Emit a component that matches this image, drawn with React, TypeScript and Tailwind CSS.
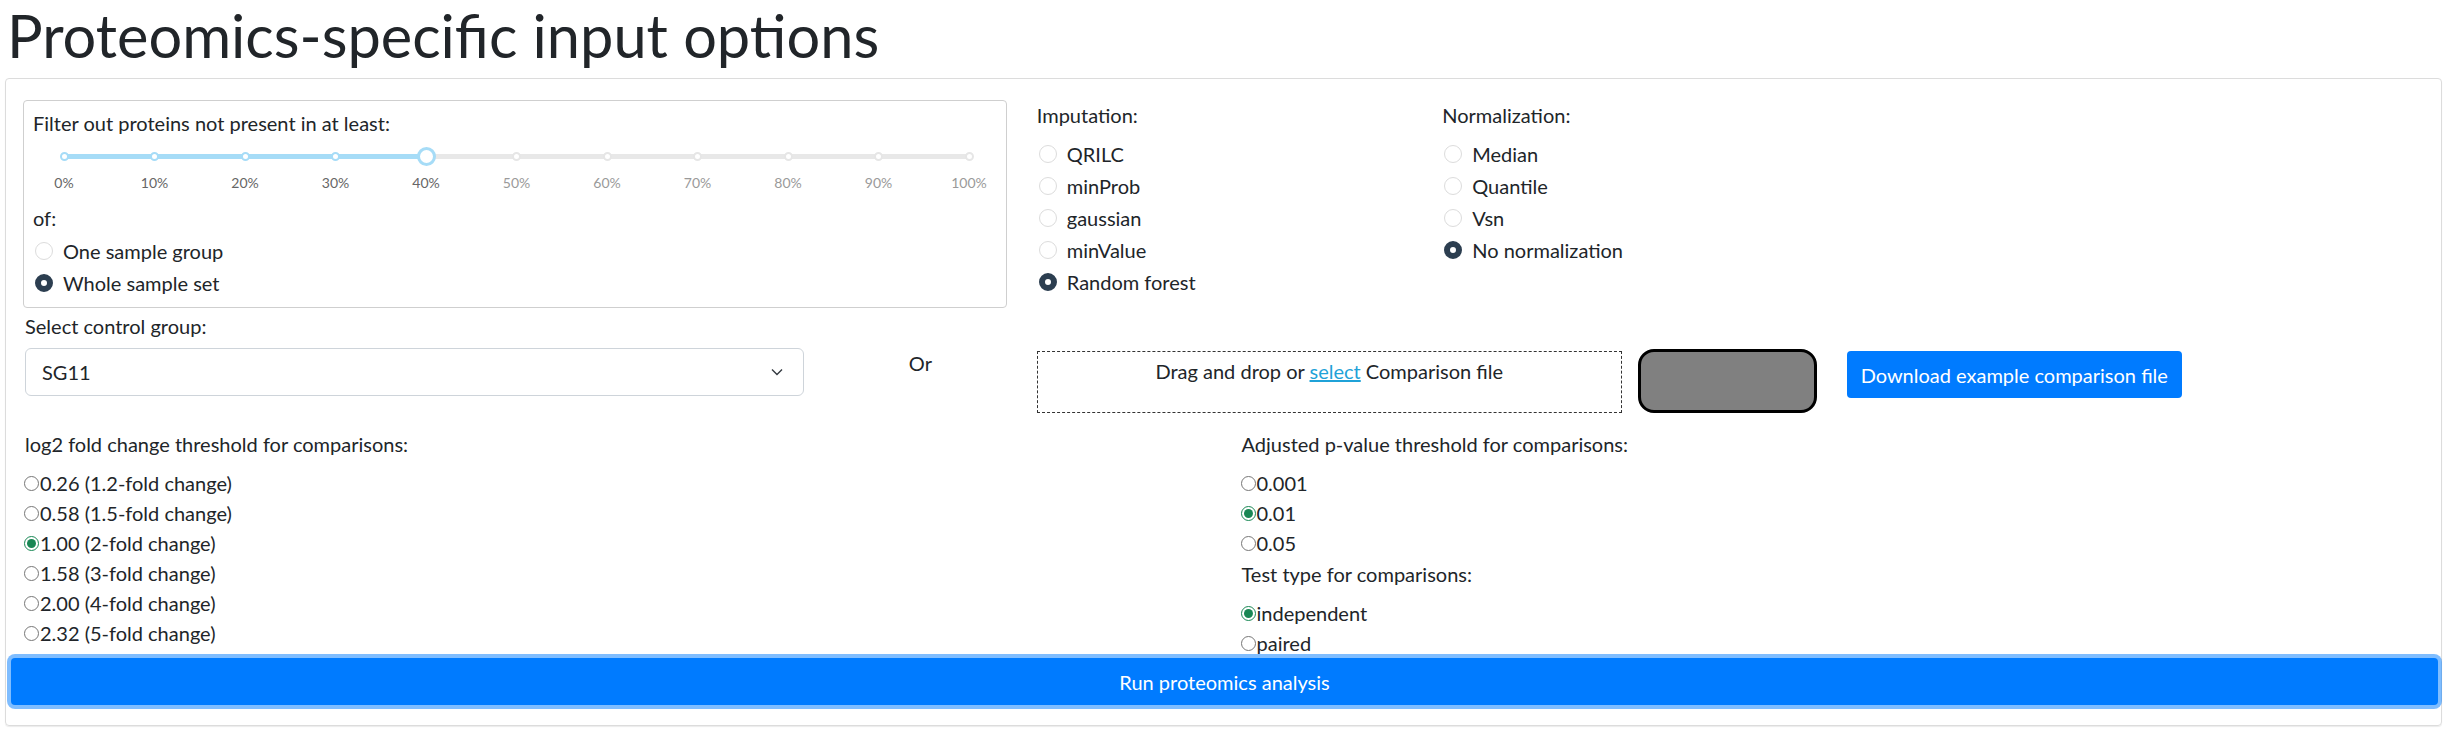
import React from "react";

const FONT = { fontFamily: "Lato, 'Noto Sans', sans-serif" };

function PrettyRadio({ label, checked }: { label: string; checked?: boolean }) {
  return (
    <div className="flex items-center h-[30px] mb-[2px]">
      <span
        className={
          checked
            ? "ml-[2px] w-[18px] h-[18px] rounded-full border-[6px] border-[#2c3e50] bg-white"
            : "ml-[2px] w-[18px] h-[18px] rounded-full border border-[#dcdcdc] bg-white"
        }
      />
      <span className="ml-[10px]">{label}</span>
    </div>
  );
}

function NativeRadio({ name, label, checked }: { name: string; label: string; checked?: boolean }) {
  return (
    <label className="flex items-center h-[30px]">
      <input
        type="radio"
        name={name}
        defaultChecked={checked}
        className="m-0 ml-[1px] mr-[1px] w-[15px] h-[15px] accent-[#198754]"
      />
      <span>{label}</span>
    </label>
  );
}

const ticks = [0, 10, 20, 30, 40, 50, 60, 70, 80, 90, 100];

function Slider({ value }: { value: number }) {
  return (
    <div className="relative h-[55px] ml-[31px] w-[905px]">
      <div className="absolute left-0 right-0 top-[16px] h-[5px] rounded-full bg-[#e8e8e8]" />
      <div
        className="absolute left-0 top-[16px] h-[5px] rounded-full bg-[#a6dcf7]"
        style={{ width: `${value}%` }}
      />
      {ticks.map((t) => (
        <div
          key={t}
          className={
            t <= value
              ? "absolute top-[14px] w-[9px] h-[9px] -ml-[4.5px] rounded-full bg-white border-2 border-[#a6dcf7]"
              : "absolute top-[14px] w-[9px] h-[9px] -ml-[4.5px] rounded-full bg-white border-2 border-[#e6e6e6]"
          }
          style={{ left: `${t}%` }}
        />
      ))}
      <div
        className="absolute top-[9px] w-[19px] h-[19px] -ml-[9.5px] rounded-full bg-white border-[3px] border-[#a6dcf7]"
        style={{ left: `${value}%` }}
      />
      {ticks.map((t) => (
        <div
          key={"l" + t}
          className={
            t <= value
              ? "absolute top-[35px] leading-[20px] text-[14px] text-[#666] -translate-x-1/2"
              : "absolute top-[35px] leading-[20px] text-[14px] text-[#9a9a9a] -translate-x-1/2"
          }
          style={{ left: `${t}%` }}
        >
          {t}%
        </div>
      ))}
    </div>
  );
}

export default function App() {
  return (
    <div className="bg-white min-h-screen px-[5px] text-[20px] leading-[30px] text-[#212529]" style={FONT}>
      <h1 className="text-[59.5px] leading-[1.2] font-normal text-[#212529] pl-[2px] mb-[7px]">
        Proteomics-specific input options
      </h1>

      <div className="border border-[#dcdcdc] rounded-[4px] shadow-[0_1px_1px_rgba(0,0,0,0.08)] pl-[2px] pt-[21px] pb-[20px]">
        {/* row 1 */}
        <div className="grid grid-cols-12">
          <div className="col-span-5 px-[15px]">
            <div className="border border-[#cfcfcf] rounded-[4px] pl-[9px] pt-[7px] pb-[7px]">
              <div>Filter out proteins not present in at least:</div>
              <Slider value={40} />
              <div className="mt-[10px] mb-[3px]">of:</div>
              <PrettyRadio label="One sample group" />
              <PrettyRadio label="Whole sample set" checked />
            </div>
          </div>
          <div className="col-span-2 px-[15px]">
            <div className="mb-[9px]">Imputation:</div>
            <PrettyRadio label="QRILC" />
            <PrettyRadio label="minProb" />
            <PrettyRadio label="gaussian" />
            <PrettyRadio label="minValue" />
            <PrettyRadio label="Random forest" checked />
          </div>
          <div className="col-span-2 px-[15px]">
            <div className="mb-[9px]">Normalization:</div>
            <PrettyRadio label="Median" />
            <PrettyRadio label="Quantile" />
            <PrettyRadio label="Vsn" />
            <PrettyRadio label="No normalization" checked />
          </div>
        </div>

        {/* row 2 */}
        <div className="grid grid-cols-12 mt-[3px]">
          <div className="col-span-4 px-[15px]">
            <div className="pl-[2px] mb-[7px]">Select control group:</div>
            <div className="ml-[2px] h-[48px] border border-[#ced4da] rounded-[6px] flex items-center justify-between pl-[16px] pr-[20px] bg-white">
              <span>SG11</span>
              <svg width="12" height="8" viewBox="0 0 12 8" fill="none">
                <path d="M1 1.5 L6 6.5 L11 1.5" stroke="#343a40" strokeWidth="1.4" />
              </svg>
            </div>
          </div>
          <div className="col-span-1 px-[15px] pt-[37px] text-center">Or</div>
          <div className="col-span-7 px-[15px] pt-[40px] flex items-start">
            <div className="w-[585px] h-[62px] border border-dashed border-[#333] pt-[4px] text-center">
              Drag and drop or{" "}
              <span className="text-[#1fa2d8] underline">select</span> Comparison file
            </div>
            <div className="ml-[16px] -mt-[2px] w-[179px] h-[64px] rounded-[16px] border-[3px] border-black bg-[#808080]" />
            <button className="ml-[30px] w-[335px] h-[47px] rounded-[4px] bg-[#007bff] text-white text-[20px]">
              Download example comparison file
            </button>
          </div>
        </div>

        {/* row 3 */}
        <div className="grid grid-cols-2 mt-[16px]">
          <div className="px-[15px]">
            <div className="pl-[2px] mb-[9px]">log2 fold change threshold for comparisons:</div>
            <NativeRadio name="fc" label="0.26 (1.2-fold change)" />
            <NativeRadio name="fc" label="0.58 (1.5-fold change)" />
            <NativeRadio name="fc" label="1.00 (2-fold change)" checked />
            <NativeRadio name="fc" label="1.58 (3-fold change)" />
            <NativeRadio name="fc" label="2.00 (4-fold change)" />
            <NativeRadio name="fc" label="2.32 (5-fold change)" />
          </div>
          <div className="px-[15px]">
            <div className="pl-[2px] mb-[9px]">Adjusted p-value threshold for comparisons:</div>
            <NativeRadio name="pv" label="0.001" />
            <NativeRadio name="pv" label="0.01" checked />
            <NativeRadio name="pv" label="0.05" />
            <div className="pl-[2px] mb-[9px] mt-[1px]">Test type for comparisons:</div>
            <NativeRadio name="tt" label="independent" checked />
            <NativeRadio name="tt" label="paired" />
          </div>
        </div>

        <div className="px-[3px]">
          <button className="w-full h-[47px] rounded-[4px] bg-[#007bff] text-white text-[20px] shadow-[0_0_0_4px_rgba(0,123,255,0.5)]">
            Run proteomics analysis
          </button>
        </div>
      </div>
    </div>
  );
}
